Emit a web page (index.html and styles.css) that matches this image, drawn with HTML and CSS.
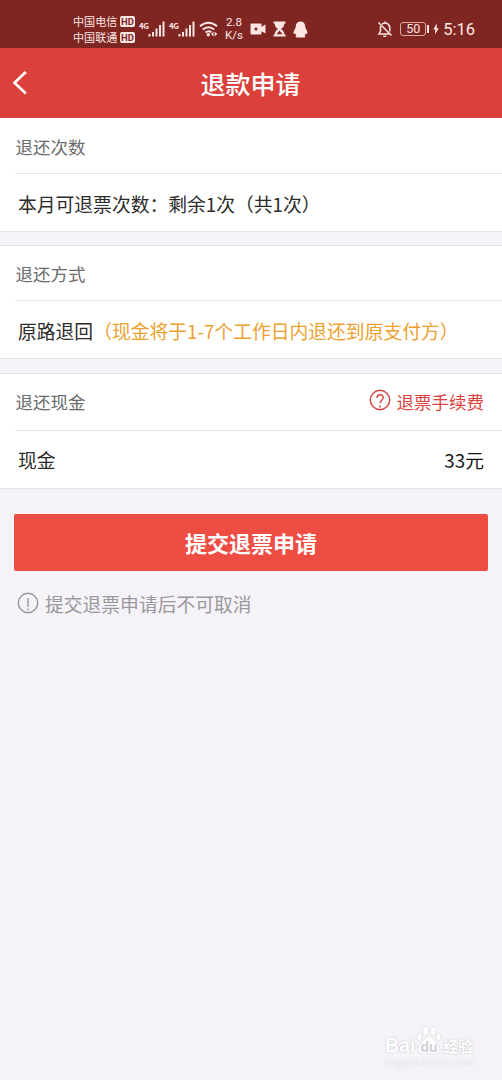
FILE: index.html
```html
<!DOCTYPE html>
<html lang="zh-CN">
<head>
    <meta charset="UTF-8">
    <meta name="viewport" content="width=device-width, initial-scale=1.0">
    <title>退款申请</title>
    <link rel="stylesheet" href="styles.css">
</head>
<body>
    <div class="status-bar">
        <div class="carriers">
            <div class="carrier">中国电信<span class="hd">HD</span></div>
            <div class="carrier">中国联通<span class="hd">HD</span></div>
        </div>
        <div class="signal">
            <span class="net">4G</span>
            <svg width="17" height="16" viewBox="0 0 17 16"><path d="M1.5 13v2.500M5 11v4.500M8.500 7.500v8M12 4v11.500M15.500.500v15"/></svg>
        </div>
        <div class="signal second">
            <span class="net">4G</span>
            <svg width="17" height="16" viewBox="0 0 17 16"><path d="M1.5 13v2.500M5 11v4.500M8.500 7.500v8M12 4v11.500M15.500.500v15"/></svg>
        </div>
        <svg class="wifi" width="19" height="16" viewBox="0 0 19 16">
            <path d="M1 5.300Q9.500-1.700 18 5.300M3.800 8.600Q9.500 3.800 15.200 8.600M6.500 11.600Q9.500 9 12.300 11.300"/>
            <circle class="fill" cx="9.300" cy="13.800" r="1.700"/>
            <path class="fill" d="M14.500 10.500v5l-2.500-2.500zM15.700 10.500v5l2.500-2.500z"/>
        </svg>
        <div class="speed">2.8<br>K/s</div>
        <svg class="camera" width="16" height="12" viewBox="0 0 16 12">
            <path class="fill" fill-rule="evenodd" d="M1.500.5h9q1 0 1 1v2.300l4-2.300v9l-4-2.300v2.300q0 1-1 1h-9q-1 0-1-1v-9q0-1 1-1zM6 4.500a1.500 1.500 0 1 0 .01 0z"/>
        </svg>
        <svg class="hourglass" width="13" height="16" viewBox="0 0 13 16">
            <path class="fill" fill-rule="evenodd" d="M.5.500h12v2h-1.200q0 3.500-3.500 5.500 3.500 2 3.500 5.500h1.200v2H.5v-2h1.200q0-3.500 3.500-5.500-3.500-2-3.500-5.500H.5zM6.500 9.500l-3 3.700h6z"/>
        </svg>
        <svg class="penguin" width="15" height="17" viewBox="0 0 15 17">
            <path class="fill" d="M7.500.5c-3 0-4.700 2.200-4.700 5.200 0 1.300-2.300 4.200-2.300 6.300 0 1.100.7 1.300 1.700.2.200.9.600 1.600 1.200 2.200-1.300.5-1 2.100 1 2.100h6.200c2 0 2.300-1.600 1-2.100.6-.6 1-1.300 1.200-2.200 1 1.100 1.700.9 1.700-.2 0-2.100-2.300-5-2.300-6.300 0-3-1.700-5.200-4.700-5.200z"/>
        </svg>
        <svg class="mute" width="16" height="17" viewBox="0 0 16 17">
            <path d="M1.500 1.500l13 13M5 3.200c4-2.700 7.800-.2 7.800 4v3.300M3.500 5v5L2 13h10M6.300 15.200h3M8 .500v1.500"/>
        </svg>
        <div class="battery">50</div>
        <div class="battery-tip"></div>
        <svg class="bolt" width="6" height="12" viewBox="0 0 6 12"><path class="fill" d="M3.800.5L.3 6.500h2L2 11.500l3.700-6.300h-2z"/></svg>
        <div class="clock">5:16</div>
    </div>

    <div class="header">
        <svg class="back" width="16" height="26" viewBox="0 0 16 26"><path d="M13.800 2L2.500 12.800l11.300 10.700"/></svg>
        <h1>退款申请</h1>
    </div>

    <div class="section">
        <div class="section-title">退还次数</div>
        <div class="row">本月可退票次数：剩余1次（共1次）</div>
    </div>

    <div class="section way">
        <div class="section-title">退还方式</div>
        <div class="row">原路退回<span class="tip">（现金将于1-7个工作日内退还到原支付方）</span></div>
    </div>

    <div class="section cash">
        <div class="section-title">
            <span>退还现金</span>
            <a class="fee">
                <svg width="22" height="22" viewBox="0 0 22 22"><circle cx="11" cy="11" r="9.700"/><path d="M8 9c0-4.300 6.200-4.200 6.200-.5 0 2.500-3.100 2.900-3.100 5.800M11.100 16.500v2"/></svg>
                退票手续费
            </a>
        </div>
        <div class="row"><span>现金</span><span class="amount">33元</span></div>
    </div>

    <button class="submit-btn">提交退票申请</button>

    <div class="notice">
        <svg width="22" height="22" viewBox="0 0 22 22"><circle cx="11" cy="11" r="9.700"/><path d="M11 6v9M11 16.500v2"/></svg>
        提交退票申请后不可取消
    </div>

    <div class="watermark">
        <div class="brand">
            <span class="bai">Bai</span>
            <svg width="26" height="30" viewBox="0 0 26 30">
                <ellipse cx="3.500" cy="11" rx="2.700" ry="3.700"/>
                <ellipse cx="9.500" cy="5" rx="2.900" ry="4.200"/>
                <ellipse cx="17" cy="5" rx="2.900" ry="4.200"/>
                <ellipse cx="22.500" cy="11" rx="2.700" ry="3.700"/>
                <path d="M13 10.500c-4 0-5.500 4-8 6.500-5 5-3 11.500 2 11 3-.3 9-.3 12 0 5 .5 7-6 2-11-2.500-2.500-4-6.500-8-6.500z"/>
                <text x="13" y="25.500" text-anchor="middle">du</text>
            </svg>
            <span class="jy">经验</span>
        </div>
        <div class="url">jingyan.baidu.com</div>
    </div>
</body>
</html>
```
FILE: styles.css
```css
* { margin: 0; padding: 0; box-sizing: border-box; }
body {
    font-family: "Noto Sans CJK SC", sans-serif;
    background: #f5f3f8;
    color: #2b2b2b;
    min-height: 1080px;
    position: relative;
}
svg {
    display: block;
    flex: none;
    fill: none;
}
.status-bar {
    display: flex;
    align-items: center;
    height: 48px;
    padding: 10px 27px 0 73px;
    background: #802622;
    color: #fbe6e4;
    white-space: nowrap;
}
.status-bar svg {
    stroke: #fbe6e4;
    stroke-width: 2;
}
.status-bar .fill {
    fill: #fbe6e4;
    stroke: none;
}
.carriers { width: 62px; }
.carrier {
    display: flex;
    align-items: center;
    justify-content: space-between;
    height: 16px;
    font-size: 11.1px;
    line-height: 16px;
}
.hd {
    width: 15px;
    height: 11px;
    border-radius: 2px;
    background: #fbe6e4;
    color: #802622;
    font: bold 9.5px/11px Roboto, sans-serif;
    text-align: center;
}
.signal {
    display: flex;
    margin-left: 4px;
    width: 27px;
}
.signal.second { margin-left: 3px; }
.net {
    width: 9px;
    font: bold 8px/9px "Noto Sans CJK SC", sans-serif;
    letter-spacing: -0.5px;
}
.wifi { margin-left: 3px; }
.speed {
    width: 20px;
    margin-left: 6px;
    font: 11.5px/13px Roboto, sans-serif;
    text-align: center;
}
.camera { margin-left: 6px; }
.hourglass { margin-left: 7px; }
.penguin { margin-left: 7px; }
.status-bar .mute {
    margin-left: auto;
    stroke-width: 1.5;
}
.battery {
    width: 26px;
    height: 14px;
    margin-left: 7px;
    border: 1px solid #d9aaa7;
    border-radius: 3px;
    font: 12.5px/12px Roboto, sans-serif;
    text-align: center;
}
.battery-tip {
    width: 2px;
    height: 8px;
    margin-left: 1px;
    background: #fbe6e4;
}
.bolt { margin-left: 4px; }
.clock {
    margin-left: 4px;
    padding-top: 2px;
    font: 16.5px/20px Roboto, sans-serif;
}
.header {
    display: grid;
    grid-template-columns: 40px 1fr 40px;
    align-items: center;
    height: 70px;
    background: #db403b;
    color: #fff;
}
.header h1 {
    margin-left: -1px;
    font-size: 25px;
    font-weight: 500;
    line-height: 36px;
    text-align: center;
}
.back {
    margin-left: 12px;
    stroke: #fff;
    stroke-width: 2.6;
}
.section {
    height: 114px;
    margin-bottom: 14px;
    background: #fff;
    border-bottom: 1px solid #e4e2e5;
}
.section + .section { border-top: 1px solid #e4e2e5; }
.section-title {
    display: flex;
    align-items: center;
    justify-content: space-between;
    height: 56px;
    margin-left: 15px;
    padding: 2px 18px 0 0.5px;
    border-bottom: 1px solid #e4e2e5;
    color: #6b6b6b;
    font-size: 17.5px;
}
.row {
    display: flex;
    align-items: center;
    justify-content: space-between;
    height: 57px;
    padding: 2px 18px 0;
    font-size: 18.8px;
    white-space: nowrap;
}
.way { margin-top: -1px; }
.way .section-title {
    height: 55px;
    padding-top: 1px;
}
.row .tip {
    flex: 1;
    color: #eda02e;
}
.fee {
    display: flex;
    align-items: center;
    gap: 6px;
    color: #d9443f;
}
.fee svg {
    margin: -4px 0 0 -1px;
    stroke: #d9443f;
    stroke-width: 1.4;
}
.cash { height: 116px; }
.cash .section-title {
    height: 57px;
    padding-top: 0;
    padding-bottom: 1px;
}
.cash .row {
    padding-top: 0;
    padding-bottom: 1px;
}
.amount { color: #151515; }
.submit-btn {
    display: block;
    width: 474px;
    height: 57px;
    margin: 25px 14px 0;
    border: none;
    border-radius: 2px;
    background: #ee4d43;
    color: #fff;
    font: bold 22px/57px "Noto Sans CJK SC", sans-serif;
}
.notice {
    display: flex;
    align-items: center;
    gap: 6px;
    margin: 19px 17px 0;
    color: #9a989c;
    font-size: 18.8px;
    line-height: 28px;
}
.notice svg {
    margin-top: -2px;
    stroke: #9a989c;
    stroke-width: 1.4;
}
.watermark {
    position: absolute;
    left: 385px;
    top: 1026px;
    color: #fff;
    text-shadow: 0 0 1px #bbb9c0, 0 0 2px #d5d3d9;
    white-space: nowrap;
}
.brand {
    display: flex;
    align-items: flex-end;
    height: 30px;
}
.brand svg {
    fill: #fff;
    stroke: #dddbe0;
    stroke-width: 0.8;
}
.brand text {
    fill: #cfcdd3;
    stroke: none;
    font: bold 14px "Liberation Sans", sans-serif;
    text-shadow: none;
}
.bai {
    width: 31px;
    font: bold 19.5px/22px "Liberation Sans", sans-serif;
}
.jy {
    margin-left: 1px;
    font: bold 15px/20px "Noto Sans CJK SC", sans-serif;
}
.url {
    font: 11px/13px "Liberation Sans", sans-serif;
    opacity: 0.6;
}
```
